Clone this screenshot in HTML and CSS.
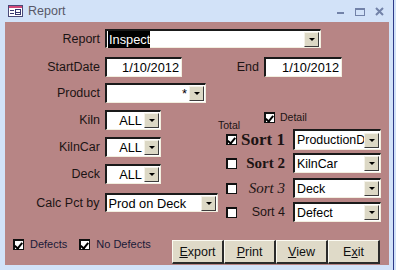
FILE: index.html
```html
<!DOCTYPE html>
<html>
<head>
<meta charset="utf-8">
<link rel="stylesheet" href="styles.css">
</head>
<body>
<div class="window">
  <div class="titlebar">
    <svg class="appicon" width="15" height="12" viewBox="0 0 15 12">
      <rect x="0.5" y="0.5" width="14" height="11" fill="#fff" stroke="#4a4a78"/>
      <rect x="1" y="1" width="13" height="2" fill="#d04878"/>
      <rect x="2" y="5" width="4" height="1" fill="#3a3a70"/>
      <rect x="2" y="8" width="4" height="1" fill="#3a3a70"/>
      <rect x="7.5" y="4.5" width="5" height="5" fill="none" stroke="#3a3a70"/>
      <rect x="8" y="7" width="4" height="1" fill="#3a3a70"/>
    </svg>
    <span class="title">Report</span>
    <div class="controls">
      <svg width="9" height="9" viewBox="0 0 9 9"><rect x="1" y="5" width="7" height="2" fill="#7282a8"/></svg>
      <svg width="10" height="9" viewBox="0 0 10 9"><rect x="0.5" y="1.5" width="9" height="7" fill="none" stroke="#7282a8"/><rect x="0" y="1" width="10" height="2" fill="#7282a8"/></svg>
      <svg width="9" height="9" viewBox="0 0 9 9"><path d="M1 1 L8 8 M8 1 L1 8" stroke="#7282a8" stroke-width="2"/></svg>
    </div>
  </div>
  <div class="form">
    <div class="row r-report">
      <span class="lbl">Report</span>
      <div class="box combo w-report"><span class="val"><span class="sel">Inspect</span></span><span class="dd"></span></div>
    </div>
    <div class="row r-dates">
      <span class="lbl">StartDate</span>
      <div class="box w-date"><span class="val ar">1/10/2012</span></div>
      <span class="lbl-end">End</span>
      <div class="box w-date2"><span class="val ar">1/10/2012</span></div>
    </div>
    <div class="lower">
      <div class="leftcol">
        <div class="row">
          <span class="lbl">Product</span>
          <div class="box combo w-product"><span class="val ar">*</span><span class="dd"></span></div>
        </div>
        <div class="row">
          <span class="lbl">Kiln</span>
          <div class="box combo w-small"><span class="val ar">ALL</span><span class="dd"></span></div>
        </div>
        <div class="row">
          <span class="lbl">KilnCar</span>
          <div class="box combo w-small"><span class="val ar">ALL</span><span class="dd"></span></div>
        </div>
        <div class="row">
          <span class="lbl">Deck</span>
          <div class="box combo w-small"><span class="val ar">ALL</span><span class="dd"></span></div>
        </div>
        <div class="row r-calc">
          <span class="lbl">Calc Pct by</span>
          <div class="box combo w-calc"><span class="val">Prod on Deck</span><span class="dd"></span></div>
        </div>
      </div>
      <div class="rightcol">
        <div class="head">
          <span class="total">Total</span>
          <span class="cb checked"></span>
          <span class="detail">Detail</span>
        </div>
        <div class="sort s1">
          <span class="cb checked"></span>
          <span class="slbl b1">Sort 1</span>
          <div class="box combo w-sort"><span class="val">ProductionD</span><span class="dd"></span></div>
        </div>
        <div class="sort s2">
          <span class="cb"></span>
          <span class="slbl b2">Sort 2</span>
          <div class="box combo w-sort"><span class="val">KilnCar</span><span class="dd"></span></div>
        </div>
        <div class="sort s3">
          <span class="cb"></span>
          <span class="slbl i3">Sort 3</span>
          <div class="box combo w-sort"><span class="val">Deck</span><span class="dd"></span></div>
        </div>
        <div class="sort s4">
          <span class="cb"></span>
          <span class="slbl n4">Sort 4</span>
          <div class="box combo w-sort"><span class="val">Defect</span><span class="dd"></span></div>
        </div>
      </div>
    </div>
    <div class="bottom">
      <div class="checks">
        <span class="cb checked"></span><span class="ctext">Defects</span>
        <span class="cb checked gap"></span><span class="ctext">No Defects</span>
      </div>
      <div class="buttons">
        <span class="btn"><u>E</u>xport</span>
        <span class="btn"><u>P</u>rint</span>
        <span class="btn"><u>V</u>iew</span>
        <span class="btn">E<u>x</u>it</span>
      </div>
    </div>
  </div>
</div>
</body>
</html>
```

FILE: styles.css
```css
html, body {
  margin: 0;
  padding: 0;
}
body {
  width: 396px;
  height: 270px;
  background: #d2e2f8;
  font-family: "Liberation Sans", Arial, sans-serif;
  overflow: hidden;
}
.window {
  width: 393px;
  height: 270px;
  border-right: 1px solid #2e3a88;
  box-sizing: content-box;
}
.titlebar {
  height: 22px;
  display: flex;
  align-items: center;
  padding-left: 8px;
  box-sizing: border-box;
}
.appicon {
  display: block;
  margin-top: -1px;
}
.title {
  margin-left: 5px;
  font-size: 12.5px;
  color: #585868;
}
.controls {
  margin-left: auto;
  margin-right: 9px;
  display: flex;
  align-items: center;
  gap: 10px;
}
.controls svg {
  display: block;
}
.form {
  margin-left: 5px;
  width: 384px;
  height: 243px;
  background: #b78585;
  display: flex;
  flex-direction: column;
  padding-top: 7px;
  box-sizing: border-box;
  color: #1c1414;
}
.row {
  display: flex;
  align-items: center;
  height: 20px;
}
.r-report {
  height: 19px;
}
.r-dates {
  margin-top: 9px;
}
.lbl {
  width: 95px;
  margin-right: 5px;
  text-align: right;
  font-size: 12.5px;
}
.lbl-end {
  width: 77px;
  margin-right: 5px;
  text-align: right;
  font-size: 12.5px;
}
.box {
  height: 100%;
  background: #fff;
  border-top: 2px solid #1a1a1a;
  border-left: 2px solid #1a1a1a;
  border-right: 1px solid #f2eedf;
  border-bottom: 1px solid #f2eedf;
  box-sizing: border-box;
  display: flex;
  align-items: center;
  font-size: 12.8px;
  color: #000;
}
.val {
  flex: 1;
  min-width: 0;
  padding: 0 2px 0 1px;
  white-space: nowrap;
}
.val.ar {
  text-align: right;
}
.sel {
  background: #000;
  color: #fff;
  padding: 1px 0 1px 1px;
}
.dd {
  flex: none;
  width: 15px;
  height: 15px;
  margin-right: 1px;
  background: #dcd8c5;
  border-top: 1px solid #f4f2e8;
  border-left: 1px solid #f4f2e8;
  border-right: 1px solid #3c3c3c;
  border-bottom: 1px solid #3c3c3c;
  box-sizing: border-box;
  display: flex;
  align-items: center;
  justify-content: center;
}
.dd::after {
  content: "";
  width: 0;
  height: 0;
  border-left: 3px solid transparent;
  border-right: 3px solid transparent;
  border-top: 3px solid #000;
  margin-left: 1px;
}
.w-report { width: 216px; }
.w-date { width: 77px; }
.w-date2 { width: 78px; }
.w-product { width: 101px; }
.w-small { width: 56px; }
.w-calc { width: 114px; }
.w-sort { width: 88px; }
.w-sort .val, .w-calc .val { padding-left: 2px; padding-right: 0; }
.w-sort { font-size: 12.4px; }
.lower {
  display: flex;
  margin-top: 6px;
}
.leftcol {
  width: 213px;
  display: flex;
  flex-direction: column;
  gap: 7px;
}
.r-calc {
  margin-top: 2px;
  height: 19px;
}
.rightcol {
  padding-top: 29px;
  display: flex;
  flex-direction: column;
}
.head {
  display: flex;
  height: 17px;
  align-items: flex-start;
}
.total {
  width: 46px;
  align-self: flex-end;
  font-size: 10.5px;
  line-height: 10px;
  margin-bottom: -1px;
}
.detail {
  margin-left: 5px;
  font-size: 10.5px;
  line-height: 11px;
}
.cb {
  flex: none;
  width: 11px;
  height: 11px;
  box-sizing: border-box;
  background: #fff;
  border: 1px solid #101010;
  border-top-width: 2px;
  border-left-width: 2px;
  position: relative;
}
.cb.checked::after {
  content: "";
  position: absolute;
  left: 1px;
  top: 0px;
  width: 3px;
  height: 6px;
  border-right: 2px solid #000;
  border-bottom: 2px solid #000;
  transform: rotate(40deg);
  transform-origin: center;
}
.sort {
  display: flex;
  align-items: center;
  height: 20px;
}
.sort .cb {
  margin-left: 8px;
}
.s1 { height: 21px; }
.s2 { margin-top: 3px; }
.s3 { margin-top: 5px; }
.s4 { margin-top: 4px; }
.slbl {
  width: 48px;
  text-align: right;
  margin-right: 8px;
  white-space: nowrap;
}
.b1 {
  font-family: "Liberation Serif", "Times New Roman", serif;
  font-weight: bold;
  font-size: 17px;
}
.b2 {
  font-family: "Liberation Serif", "Times New Roman", serif;
  font-weight: bold;
  font-size: 15px;
}
.i3 {
  font-family: "Liberation Serif", "Times New Roman", serif;
  font-style: italic;
  font-size: 15px;
}
.n4 {
  font-size: 12.5px;
}
.bottom {
  margin-top: auto;
  display: flex;
  align-items: flex-start;
  height: 24px;
  padding-bottom: 1px;
}
.checks {
  display: flex;
  align-items: center;
  margin-left: 8px;
  margin-top: -2px;
}
.ctext {
  font-size: 11px;
  margin-left: 6px;
  color: #1a1a38;
}
.cb.gap {
  margin-left: 12px;
}
.buttons {
  display: flex;
  margin-left: auto;
  margin-right: 9px;
  height: 24px;
}
.btn {
  width: 52px;
  box-sizing: border-box;
  background: #dfdac8;
  border-top: 1px solid #fbfaf2;
  border-left: 1px solid #fbfaf2;
  border-right: 2px solid #2a2a2a;
  border-bottom: 2px solid #2a2a2a;
  display: flex;
  align-items: center;
  justify-content: center;
  font-size: 12.5px;
  color: #101010;
}
```
